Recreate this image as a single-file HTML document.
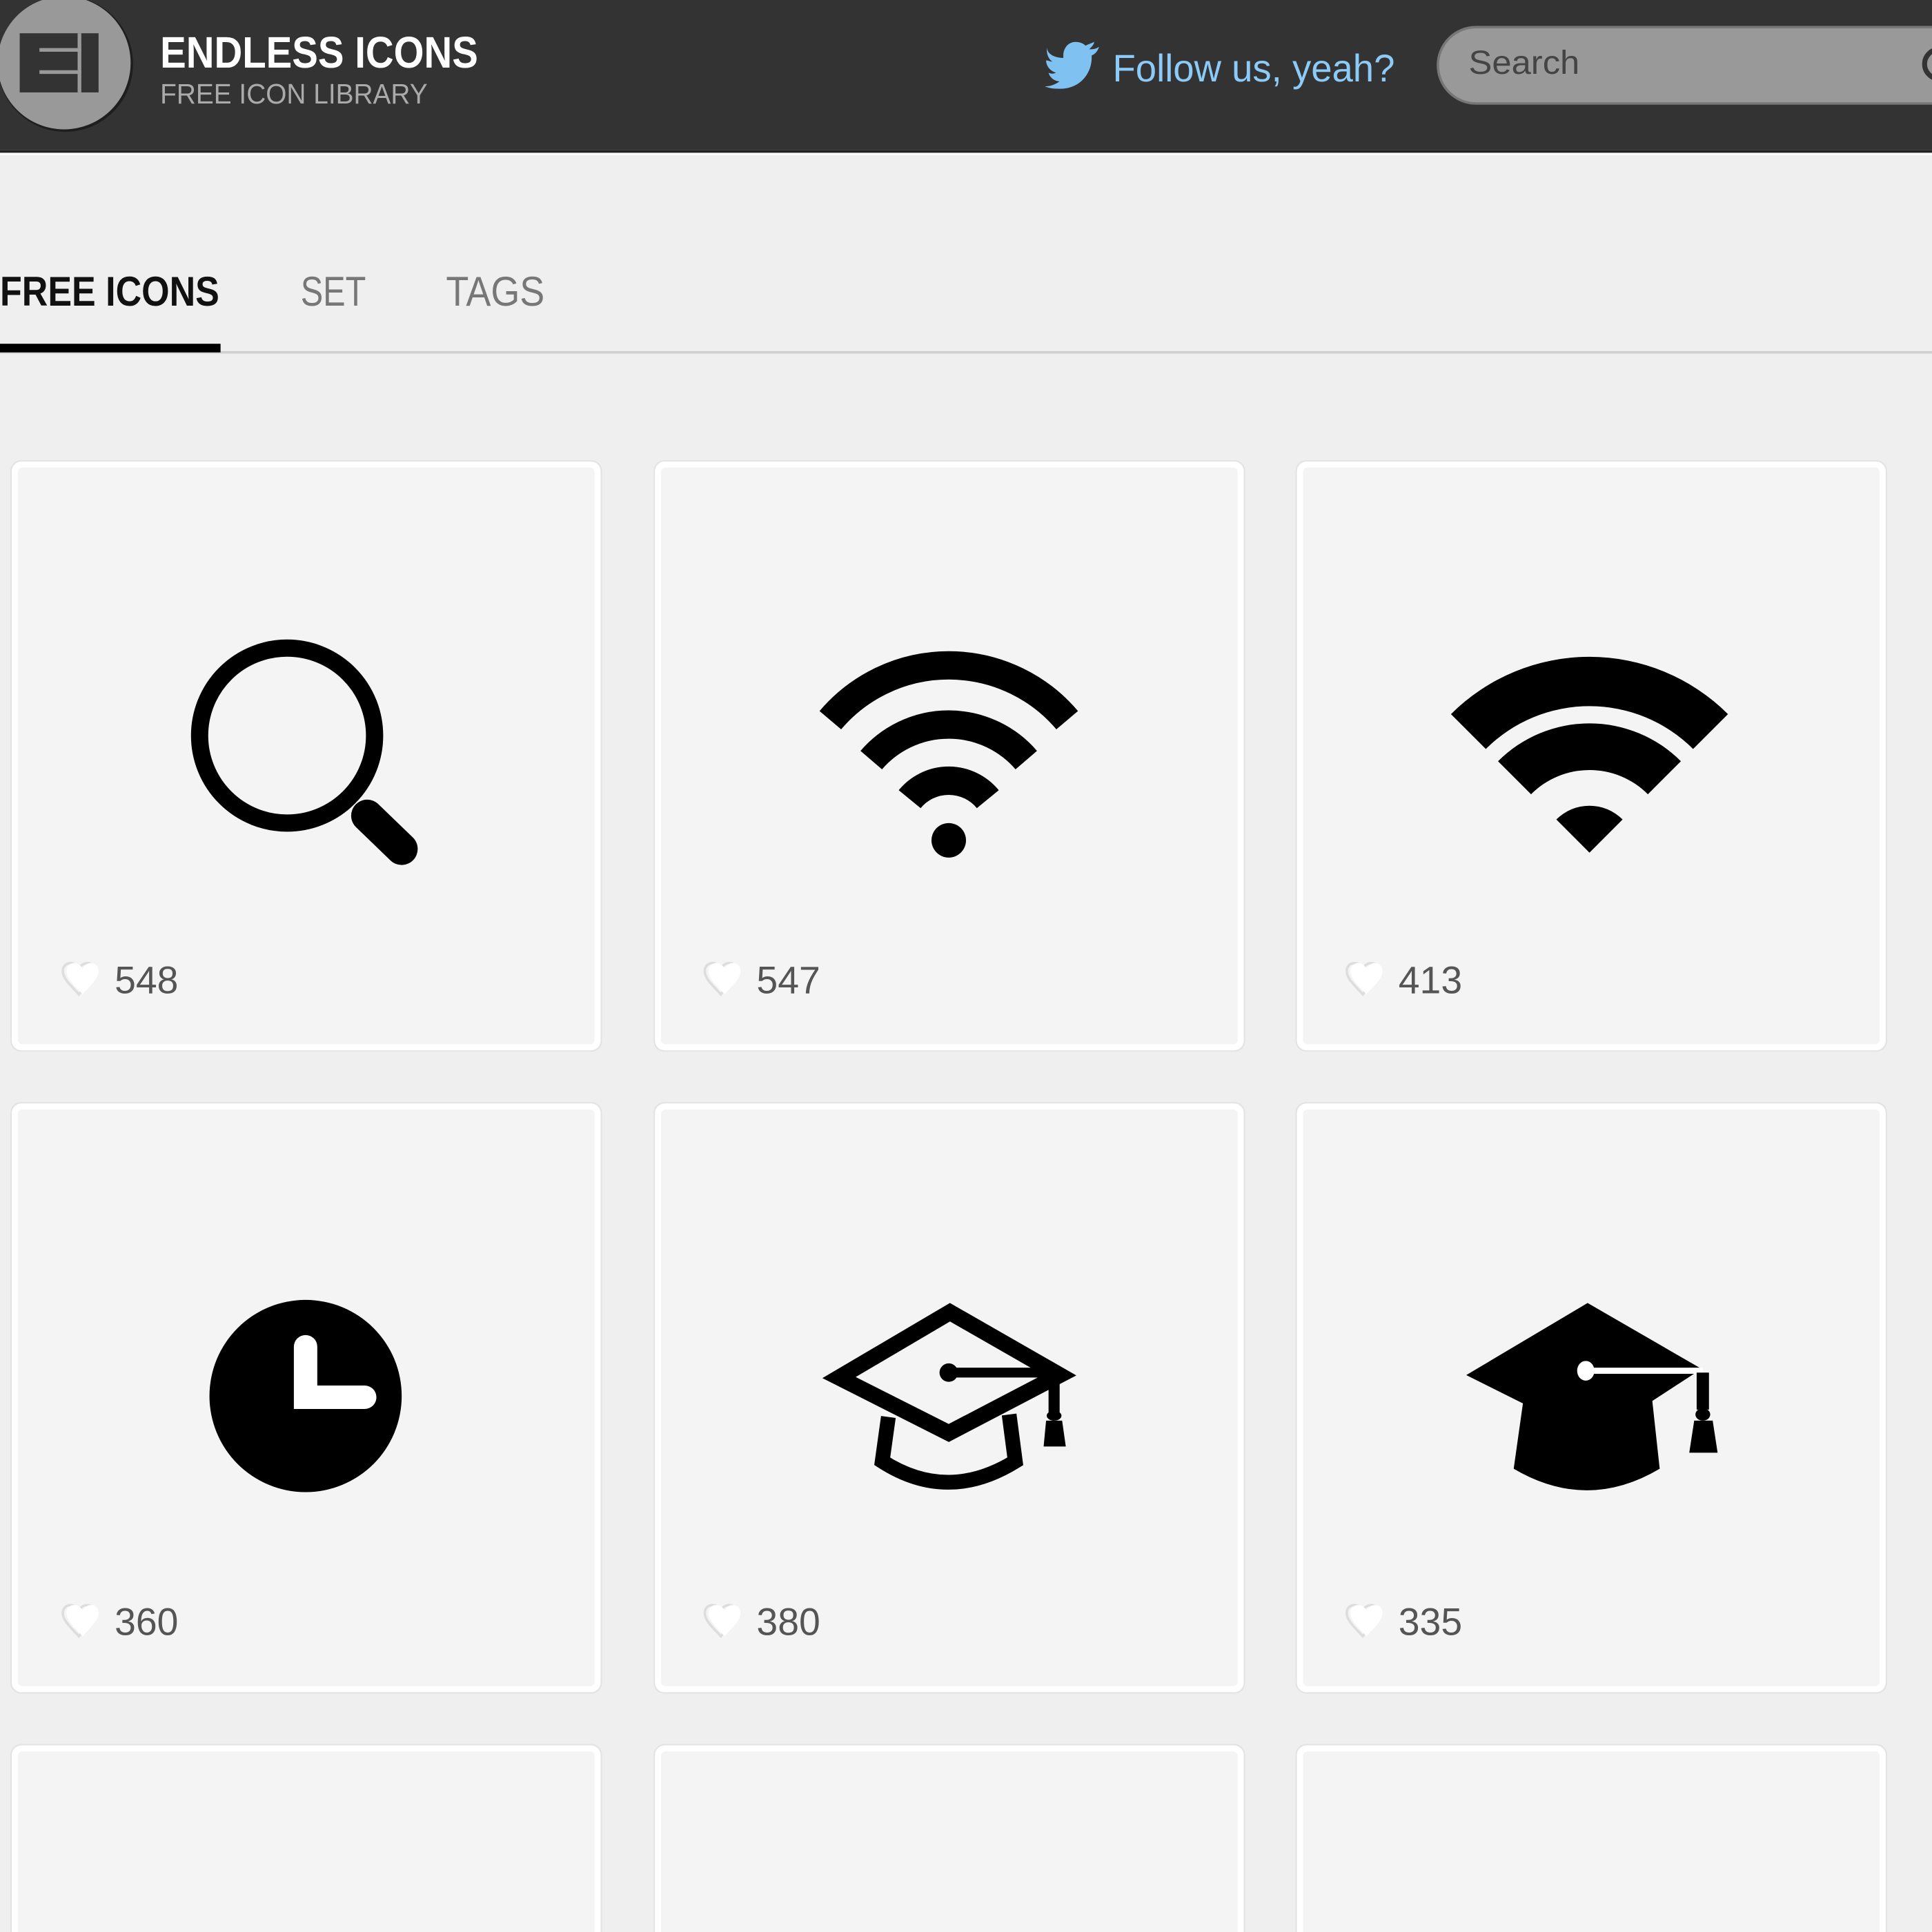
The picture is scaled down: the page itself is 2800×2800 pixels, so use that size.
<!DOCTYPE html>
<html><head><meta charset="utf-8"><style>
html,body{margin:0;padding:0;background:#efefef;width:2800px;height:2800px;overflow:hidden;}
svg{display:block;}
</style></head><body>
<svg width="2800" height="2800" viewBox="0 0 1568 1568" xmlns="http://www.w3.org/2000/svg" font-family="'Liberation Sans', sans-serif">
<rect x="0" y="0" width="1568" height="1568" fill="#efefef"/>
<!-- header -->
<rect x="0" y="0" width="1568" height="122" fill="#333"/>
<rect x="0" y="122" width="1568" height="2" fill="#222"/>
<rect x="0" y="124" width="1568" height="2" fill="#fafafa"/>
<circle cx="53" cy="52" r="55" fill="#111" opacity="0.6"/>
<circle cx="52" cy="51" r="54" fill="#999"/>
<rect x="16" y="27" width="64" height="48" fill="#333"/>
<rect x="32" y="39" width="34" height="3" fill="#999"/>
<rect x="32" y="57" width="34" height="3" fill="#999"/>
<rect x="63" y="27" width="3" height="48" fill="#999"/>
<text x="130" y="55" font-size="36" font-weight="bold" fill="#fff" textLength="258" lengthAdjust="spacingAndGlyphs">ENDLESS ICONS</text>
<text x="130" y="84" font-size="23" fill="#aaa" textLength="217" lengthAdjust="spacingAndGlyphs">FREE ICON LIBRARY</text>
<!-- twitter bird -->
<path d="M892 38 C889 40 886 40 884 40 C886 38 888 36 888 34 C886 35 883 36 881 37 C879 35 876 34 873 34 C867 34 863 39 863 45 C863 46 863 46 863 47 C855 47 849 43 850 38 C849 42 850 47 854 50 C852 50 851 49 849 49 C849 54 853 58 857 59 C855 60 853 60 851 59 C852 63 856 66 860 66 C856 69 852 70 848 70 C852 72 856 72 861 72 C877 72 886 59 886 47 L886 45 C889 44 891 41 892 38 Z" fill="#7fc2f2"/>
<text x="903" y="66" font-size="31" fill="#8ccaf7" textLength="229" lengthAdjust="spacingAndGlyphs">Follow us, yeah?</text>
<rect x="1167" y="22" width="460" height="62" rx="31" fill="#999" stroke="#777" stroke-width="2"/>
<text x="1192" y="60" font-size="27" fill="#444" textLength="90" lengthAdjust="spacingAndGlyphs">Search</text>
<circle cx="1574" cy="52" r="12" fill="none" stroke="#333" stroke-width="4"/>
<!-- tabs -->
<text x="0" y="248" font-size="34" font-weight="bold" fill="#111" textLength="178" lengthAdjust="spacingAndGlyphs">FREE ICONS</text>
<text x="244" y="248" font-size="34" fill="#777" textLength="53" lengthAdjust="spacingAndGlyphs">SET</text>
<text x="362" y="248" font-size="34" fill="#777" textLength="80" lengthAdjust="spacingAndGlyphs">TAGS</text>
<rect x="0" y="285" width="1568" height="2" fill="#d0d0d0"/>
<rect x="0" y="279" width="179" height="7" fill="#000"/>
<!-- cards -->
<g fill="#f4f4f4" stroke="#fff" stroke-width="5">
<rect x="12" y="377" width="473" height="473" rx="6"/>
<rect x="534" y="377" width="473" height="473" rx="6"/>
<rect x="1055" y="377" width="473" height="473" rx="6"/>
<rect x="12" y="898" width="473" height="473" rx="6"/>
<rect x="534" y="898" width="473" height="473" rx="6"/>
<rect x="1055" y="898" width="473" height="473" rx="6"/>
<rect x="12" y="1419" width="473" height="473" rx="6"/>
<rect x="534" y="1419" width="473" height="473" rx="6"/>
<rect x="1055" y="1419" width="473" height="473" rx="6"/>
</g>
<g fill="none" stroke="#e2e2e2" stroke-width="1">
<rect x="9" y="374" width="479" height="479" rx="8"/>
<rect x="531" y="374" width="479" height="479" rx="8"/>
<rect x="1052" y="374" width="479" height="479" rx="8"/>
<rect x="9" y="895" width="479" height="479" rx="8"/>
<rect x="531" y="895" width="479" height="479" rx="8"/>
<rect x="1052" y="895" width="479" height="479" rx="8"/>
<rect x="9" y="1416" width="479" height="479" rx="8"/>
<rect x="531" y="1416" width="479" height="479" rx="8"/>
<rect x="1052" y="1416" width="479" height="479" rx="8"/>
</g>
<!-- magnifier -->
<circle cx="233" cy="597" r="71" fill="none" stroke="#000" stroke-width="14"/>
<path d="M298 662 L326 689" stroke="#000" stroke-width="26" stroke-linecap="round"/>
<!-- wifi 1 -->
<g fill="none" stroke="#000" stroke-width="23">
<path d="M673.9 584.5 A126 126 0 0 1 866.1 584.5"/>
<path d="M707.1 616.9 A83 83 0 0 1 832.9 616.9"/>
<path d="M738.3 648.6 A41 41 0 0 1 801.7 648.6"/>
</g>
<circle cx="770" cy="682" r="14" fill="#000"/>
<!-- wifi 2 -->
<g fill="#000">
<path d="M1177.6 579.6 A159 159 0 0 1 1402.4 579.6 L1374.1 607.9 A119 119 0 0 0 1205.9 607.9 Z"/>
<path d="M1215.8 617.8 A105 105 0 0 1 1364.2 617.8 L1337.4 644.6 A67 67 0 0 0 1242.6 644.6 Z"/>
<path d="M1263.1 665.1 A38 38 0 0 1 1316.9 665.1 L1290 692 Z"/>
</g>
<!-- clock -->
<circle cx="248" cy="1133" r="78" fill="#000"/>
<path d="M248 1093 V1134 H296" fill="none" stroke="#fff" stroke-width="19" stroke-linecap="round"/>
<!-- grad cap outline -->
<path d="M771 1065 L860 1116 L770 1163 L681 1118 Z" fill="none" stroke="#000" stroke-width="13" stroke-linejoin="miter"/>
<path d="M721 1150 L716 1186 Q769 1220 824 1186 L819 1148" fill="none" stroke="#000" stroke-width="12"/>
<circle cx="770" cy="1114" r="7.5" fill="#000"/>
<rect x="770" y="1110" width="80" height="8" fill="#000"/>
<rect x="851" y="1116" width="9" height="32" fill="#000"/>
<path d="M849 1153 L862 1153 L865 1174 L847 1174 Z" fill="#000"/>
<ellipse cx="855.5" cy="1149" rx="6" ry="4" fill="#000"/>
<!-- grad cap filled -->
<path d="M1288.5 1057.5 L1381 1111 L1341 1137 L1347 1192 Q1288 1227 1228.5 1192 L1236 1139 L1190 1116 Z" fill="#000"/>
<rect x="1288" y="1110" width="94" height="5" fill="#fff"/>
<ellipse cx="1287" cy="1112.5" rx="7" ry="8" fill="#fff"/>
<rect x="1377" y="1114" width="10" height="30" fill="#000"/>
<ellipse cx="1382" cy="1148" rx="6" ry="5" fill="#000"/>
<path d="M1375 1153 L1390 1153 L1394 1179 L1371 1179 Z" fill="#000"/>
<!-- hearts + counts -->
<defs>
<path id="h" d="M0 6 C0 -1 9 -3 13 4 C17 -3 26 -1 26 6 C26 13 18 19 13 25 C8 19 0 13 0 6 Z"/>
</defs>
<g>
<use href="#h" x="51" y="782" fill="none" stroke="#ddd" stroke-width="2"/>
<use href="#h" x="54" y="782" fill="#fff"/>
<use href="#h" x="572" y="782" fill="none" stroke="#ddd" stroke-width="2"/>
<use href="#h" x="575" y="782" fill="#fff"/>
<use href="#h" x="1093" y="782" fill="none" stroke="#ddd" stroke-width="2"/>
<use href="#h" x="1096" y="782" fill="#fff"/>
<use href="#h" x="51" y="1303" fill="none" stroke="#ddd" stroke-width="2"/>
<use href="#h" x="54" y="1303" fill="#fff"/>
<use href="#h" x="572" y="1303" fill="none" stroke="#ddd" stroke-width="2"/>
<use href="#h" x="575" y="1303" fill="#fff"/>
<use href="#h" x="1093" y="1303" fill="none" stroke="#ddd" stroke-width="2"/>
<use href="#h" x="1096" y="1303" fill="#fff"/>
</g>
<g font-size="31" fill="#555">
<text x="93" y="806">548</text>
<text x="614" y="806">547</text>
<text x="1135" y="806">413</text>
<text x="93" y="1327">360</text>
<text x="614" y="1327">380</text>
<text x="1135" y="1327">335</text>
</g>
</svg>
</body></html>
